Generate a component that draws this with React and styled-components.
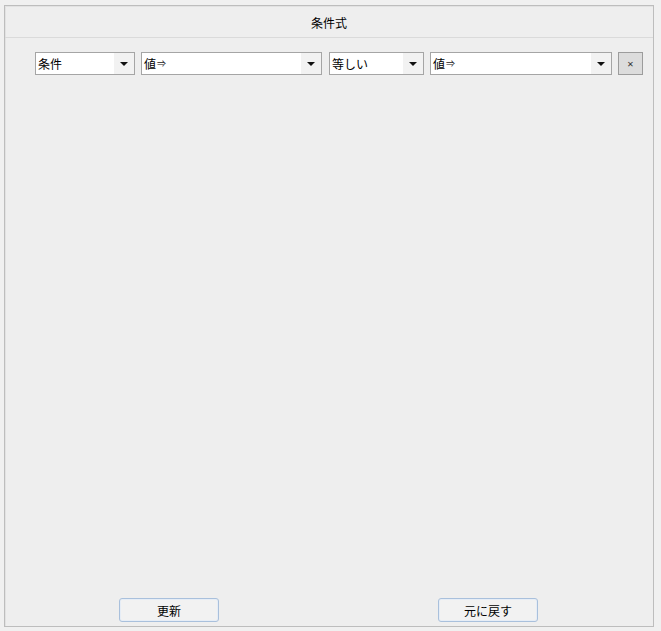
import React from "react";
import styled, { createGlobalStyle } from "styled-components";

const Global = createGlobalStyle`
  html, body { margin: 0; padding: 0; background: #f0f0f0; }
  body { font-family: "Noto Sans CJK JP", "Noto Sans", sans-serif; font-size: 12px; color: #000; }
  #root { padding: 5px 0 0 4px; }
`;

const Panel = styled.div`
  box-sizing: border-box;
  width: 650px;
  height: 622px;
  border: 1px solid #bdbdbd;
  box-shadow: inset 1px 1px 0 #e2e2e2;
  background: #eeeeee;
  display: flex;
  flex-direction: column;
`;

const Header = styled.div`
  height: 32px;
  border-bottom: 1px solid #dadada;
  display: flex;
  align-items: center;
  justify-content: center;
  font-size: 12px;
  padding-top: 2px;
  box-sizing: border-box;
`;

const Body = styled.div`
  flex: 1;
  padding: 14px 0 0 30px;
`;

const Row = styled.div`
  display: flex;
  align-items: center;
  gap: 6px;
`;

const Select = styled.div`
  box-sizing: border-box;
  width: ${(p) => p.$w}px;
  height: 23px;
  border: 1px solid #a5a5a5;
  background: #fff;
  display: flex;
  align-items: stretch;
  margin-right: ${(p) => p.$mr || 0}px;
`;

const SelectText = styled.span`
  flex: 1;
  display: flex;
  align-items: center;
  padding-left: 2px;
  font-size: 12px;
  white-space: nowrap;
  overflow: hidden;
`;

const Small = styled.span`
  font-size: 9px;
  margin-left: 1px;
  color: #222;
`;

const Arrow = styled.span`
  width: 20px;
  background: #f2f2f2;
  display: flex;
  align-items: center;
  justify-content: center;
  &::after {
    content: "";
    border-left: 4px solid transparent;
    border-right: 4px solid transparent;
    border-top: 4px solid #111;
    margin-top: 1px;
  }
`;

const CloseButton = styled.button`
  box-sizing: border-box;
  width: 25px;
  height: 23px;
  border: 1px solid #9c9c9c;
  background: #dcdcdc;
  padding: 0;
  font-family: "Noto Sans", sans-serif;
  font-size: 11px;
  color: #333;
  display: flex;
  align-items: center;
  justify-content: center;
`;

const Footer = styled.div`
  display: grid;
  grid-template-columns: 1fr 1fr;
  padding: 0 0 4px 0;
`;

const Cell = styled.div`
  display: flex;
  justify-content: center;
  padding-left: ${(p) => p.$pl || 0}px;
  padding-right: ${(p) => p.$pr || 0}px;
`;

const Button = styled.button`
  box-sizing: border-box;
  width: 100px;
  height: 24px;
  border: 1px solid #a9c0dc;
  border-radius: 3px;
  background: #f2f2f2;
  box-shadow: inset 0 0 0 1px #e6edf6;
  font-family: "Noto Sans CJK JP", sans-serif;
  font-size: 12px;
  color: #000;
  padding: 0;
`;

const fields = [
  { w: 100, text: "条件", mr: 0 },
  { w: 181, text: "値", arrow: true, mr: 1 },
  { w: 95, text: "等しい", mr: 0 },
  { w: 182, text: "値", arrow: true, mr: 0 },
];

export default function App() {
  return (
    <>
      <Global />
      <Panel>
        <Header>条件式</Header>
        <Body>
          <Row>
            {fields.map((f, i) => (
              <Select key={i} $w={f.w} $mr={f.mr}>
                <SelectText>
                  {f.text}
                  {f.arrow && <Small>⇒</Small>}
                </SelectText>
                <Arrow />
              </Select>
            ))}
            <CloseButton>×</CloseButton>
          </Row>
        </Body>
        <Footer>
          <Cell $pl={4}>
            <Button>更新</Button>
          </Cell>
          <Cell $pr={6}>
            <Button>元に戻す</Button>
          </Cell>
        </Footer>
      </Panel>
    </>
  );
}
